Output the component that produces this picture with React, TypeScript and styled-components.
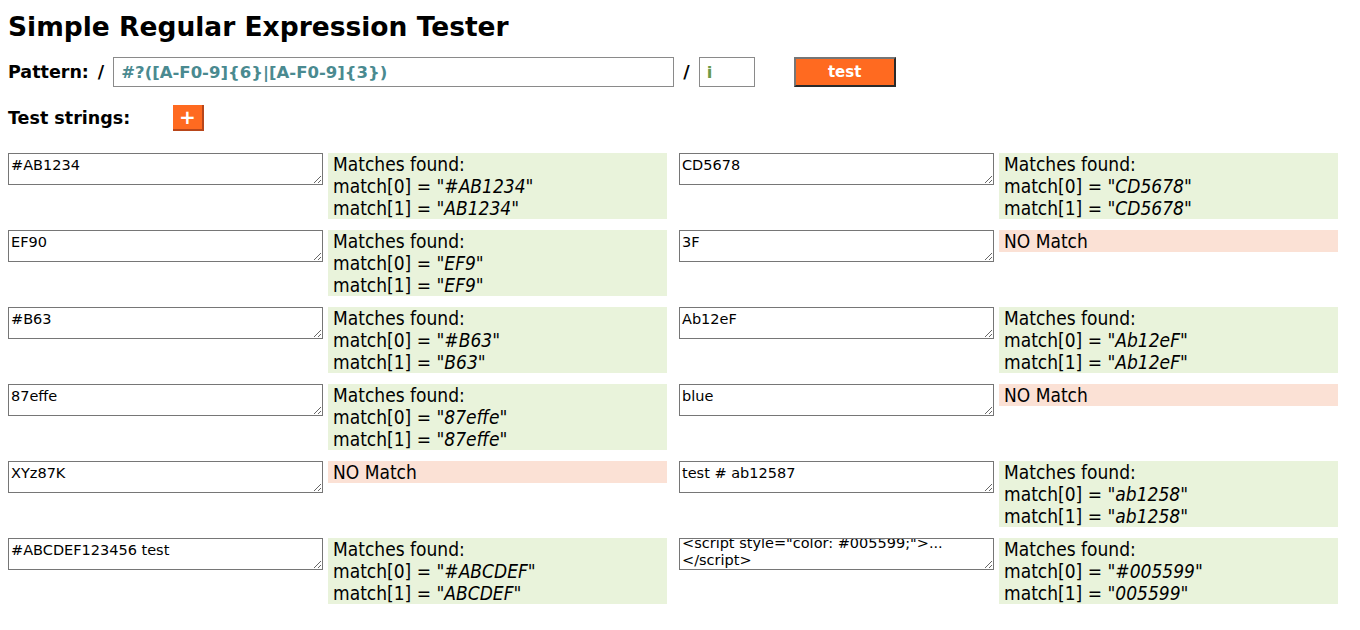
import { FC, useState, useEffect, useRef } from 'react'
import styled, { createGlobalStyle } from 'styled-components'

const GlobalStyle = createGlobalStyle`
  body {
    margin: 8px;
    background: #ffffff;
    color: #000000;
    font-family: 'DejaVu Sans', Verdana, sans-serif;
  }
`

const Title = styled.h1`
  margin: 0;
  padding-top: 2px;
  font-size: 26.5px;
  line-height: 34px;
  font-weight: bold;
`

const PatternRow = styled.div`
  display: flex;
  align-items: center;
  margin-top: 13px;
  height: 30px;
  font-size: 17.5px;
  font-weight: bold;
`

const Label = styled.span<{ $width?: number }>`
  font-size: 17.5px;
  font-weight: bold;
  width: ${(p) => (p.$width ? `${p.$width}px` : 'auto')};
`

const Slash = styled.span`
  margin: 0 9px 0 9px;
`

const PatternInput = styled.input`
  box-sizing: border-box;
  width: 561px;
  height: 30px;
  border: 1px solid #8a8a8a;
  padding: 0 7px;
  font-family: 'DejaVu Sans', Verdana, sans-serif;
  font-size: 16.5px;
  font-weight: bold;
  color: #4a8a90;
  outline: none;
`

const FlagsInput = styled(PatternInput)`
  width: 56px;
  color: #6a9a4c;
`

const TestButton = styled.button`
  box-sizing: border-box;
  margin-left: 39px;
  width: 102px;
  height: 30px;
  background: #ff6a20;
  color: #ffffff;
  font-family: 'DejaVu Sans', Verdana, sans-serif;
  font-size: 15px;
  font-weight: bold;
  border: 2px solid;
  border-color: #767676 #2a2a2a #2a2a2a #767676;
  padding: 0;
`

const StringsRow = styled.div`
  display: flex;
  align-items: center;
  margin-top: 18px;
  height: 26px;
`

const AddButton = styled.button`
  box-sizing: border-box;
  width: 31px;
  height: 26px;
  background: #ff6a20;
  color: #ffffff;
  border: none;
  border-right: 2px solid #b8461a;
  border-bottom: 2px solid #b8461a;
  font-family: 'DejaVu Sans', Verdana, sans-serif;
  font-size: 20px;
  font-weight: bold;
  line-height: 20px;
  padding: 0;
`

const Grid = styled.div`
  display: grid;
  grid-template-columns: 659px 659px;
  column-gap: 12px;
  row-gap: 11px;
  margin-top: 22px;
`

const Cell = styled.div`
  display: flex;
  align-items: flex-start;
  gap: 5px;
  height: 66px;
`

const TestArea = styled.textarea`
  box-sizing: border-box;
  width: 315px;
  height: 32px;
  flex: none;
  border: 1px solid #767676;
  padding: 3px 2px 0;
  font-family: 'DejaVu Sans', Verdana, sans-serif;
  font-size: 14.5px;
  line-height: 17px;
  color: #000;
  outline: none;
`

const Result = styled.div<{ $ok: boolean }>`
  flex: 1;
  padding: 0 5px;
  background: ${(p) => (p.$ok ? '#e9f3db' : '#fbe1d5')};
  font-family: 'DejaVu Sans Condensed', 'DejaVu Sans', Tahoma, sans-serif;
  font-size: 19px;
  line-height: 22px;

  & em {
    font-style: italic;
  }
`

const initialStrings = [
  '#AB1234',
  'CD5678',
  'EF90',
  '3F',
  '#B63',
  'Ab12eF',
  '87effe',
  'blue',
  'XYz87K',
  'test # ab12587',
  '#ABCDEF123456 test',
  '<script style="color: #005599;">...</script>',
]

const MatchResult: FC<{ pattern: string; flags: string; text: string }> = ({
  pattern,
  flags,
  text,
}) => {
  let match: RegExpMatchArray | null = null
  try {
    match = text.match(new RegExp(pattern, flags.replace('g', '')))
  } catch {
    match = null
  }

  if (!match) {
    return <Result $ok={false}>NO Match</Result>
  }

  return (
    <Result $ok>
      Matches found:
      {match.map((m, i) => (
        <div key={i}>
          match[{i}] = "<em>{m}</em>"
        </div>
      ))}
    </Result>
  )
}

// textareas open scrolled to the end of their content
const TestString: FC<{ value: string; onChange: (v: string) => void }> = ({
  value,
  onChange,
}) => {
  const ref = useRef<HTMLTextAreaElement>(null)

  useEffect(() => {
    if (ref.current) ref.current.scrollTop = ref.current.scrollHeight
  }, [])

  return <TestArea ref={ref} value={value} onChange={(e) => onChange(e.target.value)} />
}

const App: FC = () => {
  const [pattern, setPattern] = useState('#?([A-F0-9]{6}|[A-F0-9]{3})')
  const [flags, setFlags] = useState('i')
  const [strings, setStrings] = useState(initialStrings)

  const updateString = (index: number, value: string) => {
    setStrings(strings.map((s, i) => (i === index ? value : s)))
  }

  return (
    <>
      <GlobalStyle />
      <Title>Simple Regular Expression Tester</Title>
      <PatternRow>
        <Label>Pattern:</Label>
        <Slash>/</Slash>
        <PatternInput value={pattern} onChange={(e) => setPattern(e.target.value)} />
        <Slash>/</Slash>
        <FlagsInput value={flags} onChange={(e) => setFlags(e.target.value)} />
        <TestButton>test</TestButton>
      </PatternRow>
      <StringsRow>
        <Label $width={165}>Test strings:</Label>
        <AddButton onClick={() => setStrings([...strings, ''])}>+</AddButton>
      </StringsRow>
      <Grid>
        {strings.map((s, i) => (
          <Cell key={i}>
            <TestString value={s} onChange={(v) => updateString(i, v)} />
            <MatchResult pattern={pattern} flags={flags} text={s} />
          </Cell>
        ))}
      </Grid>
    </>
  )
}

export default App
